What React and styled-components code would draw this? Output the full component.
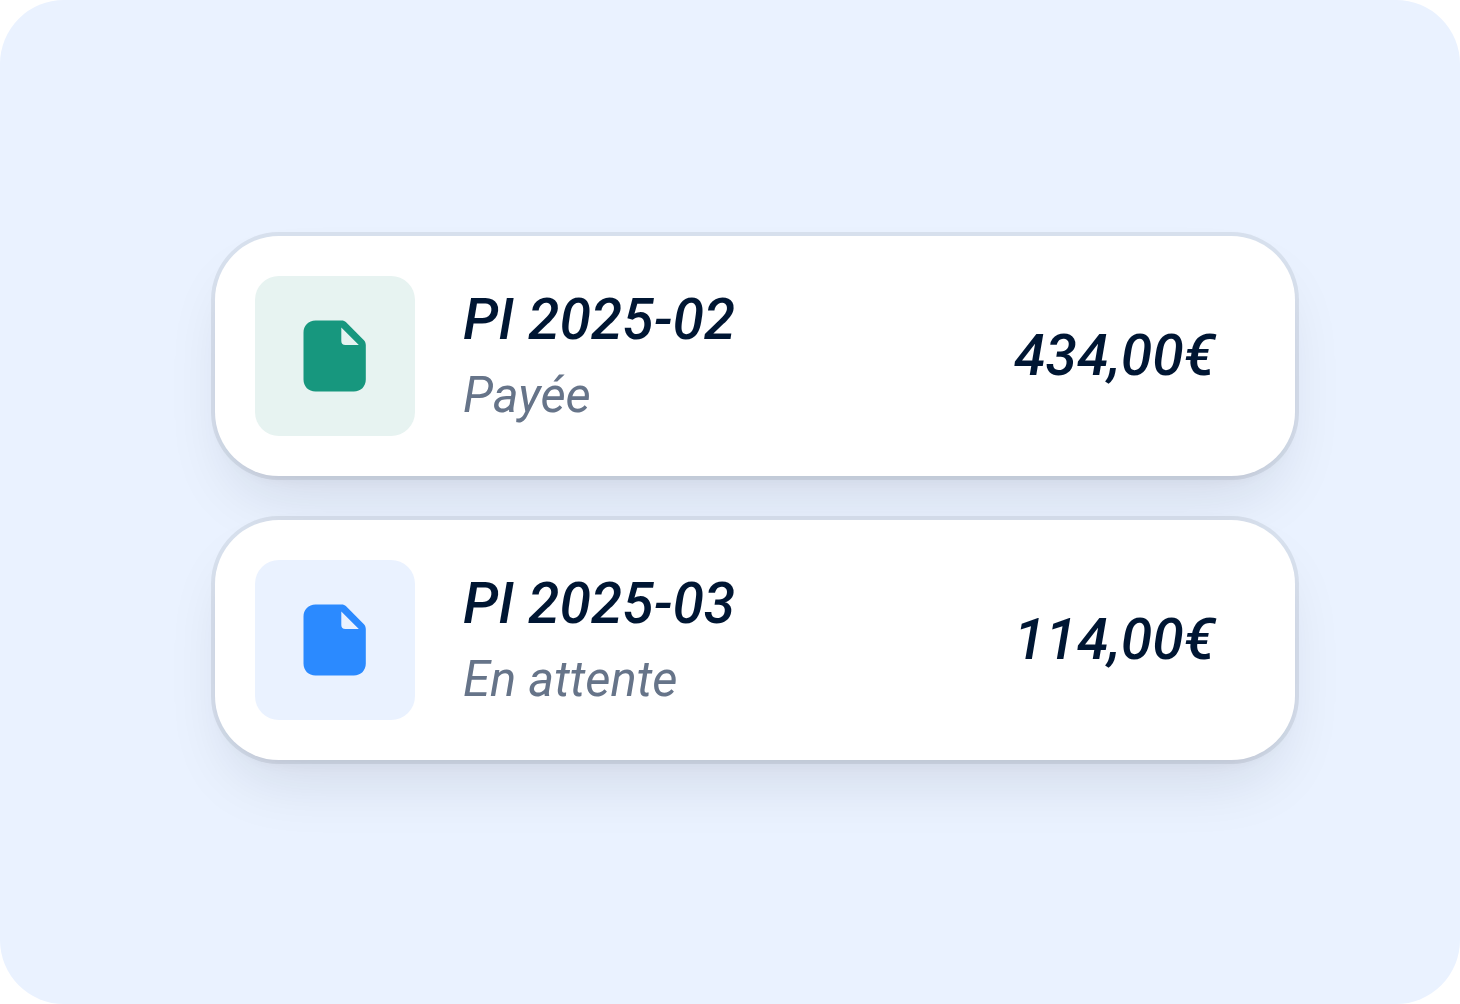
import React from "react";
import styled, { createGlobalStyle } from "styled-components";

const GlobalStyle = createGlobalStyle`
  *, *::before, *::after { box-sizing: border-box; }
  body { margin: 0; background: #ffffff; font-family: Roboto, "Liberation Sans", sans-serif; }
`;

const Stage = styled.main`
  min-height: 100vh;
  padding: 0 165px 8px 215px;
  border-radius: 64px;
  background: #eaf2ff;
  display: flex;
  flex-direction: column;
  justify-content: center;
`;

const InvoiceList = styled.ul`
  list-style: none;
  margin: 0;
  padding: 0;
  display: flex;
  flex-direction: column;
  gap: 44px;
`;

const InvoiceCard = styled.li`
  display: flex;
  align-items: center;
  gap: 48px;
  padding: 40px 80px 40px 40px;
  border-radius: 64px;
  background: #ffffff;
  box-shadow:
    0 0 0 4px rgba(16, 24, 40, 0.08),
    0 8px 16px -8px rgba(16, 24, 40, 0.06),
    0 32px 64px -16px rgba(16, 24, 40, 0.12);
`;

const IconTile = styled.div`
  flex: none;
  width: 160px;
  height: 160px;
  border-radius: 24px;
  display: grid;
  place-items: center;
  color: ${(p) => p.$color};
  background: ${(p) => p.$background};
`;

const Details = styled.div`
  flex: 1;
  min-width: 0;
`;

const Title = styled.h2`
  margin: 0;
  font-size: 57px;
  line-height: 80px;
  font-weight: 500;
  font-style: italic;
  color: #001633;
`;

const Status = styled.p`
  margin: 0;
  font-size: 49px;
  line-height: 72px;
  font-style: italic;
  color: #667489;
`;

const Amount = styled.span`
  font-size: 57px;
  line-height: 80px;
  font-weight: 500;
  font-style: italic;
  color: #001633;
`;

const FileIcon = () => (
  <svg width="96" height="96" viewBox="0 0 96 96" fill="currentColor" aria-hidden="true">
    <path
      fillRule="evenodd"
      d="M28.500 12.500H54.500C56.500 12.500 57.800 13 59.100 14.300L76.700 31.900C78 33.200 78.800 35 78.800 37V71.500C78.800 78.500 73.800 83.500 66.800 83.500H28.500C21.500 83.500 16.500 78.500 16.500 71.500V24.500C16.500 17.500 21.500 12.500 28.500 12.500ZM54.300 19.500V33C54.300 35.500 55.800 37 58.300 37H71.800Z"
    />
  </svg>
);

const invoices = [
  { title: "PI 2025-02", status: "Payée", amount: "434,00€", color: "#17977e", background: "#e7f3f1" },
  { title: "PI 2025-03", status: "En attente", amount: "114,00€", color: "#2b8aff", background: "#eaf2ff" },
];

export default function App() {
  return (
    <>
      <GlobalStyle />
      <Stage>
        <InvoiceList>
          {invoices.map((invoice) => (
            <InvoiceCard key={invoice.title}>
              <IconTile $color={invoice.color} $background={invoice.background}>
                <FileIcon />
              </IconTile>
              <Details>
                <Title>{invoice.title}</Title>
                <Status>{invoice.status}</Status>
              </Details>
              <Amount>{invoice.amount}</Amount>
            </InvoiceCard>
          ))}
        </InvoiceList>
      </Stage>
    </>
  );
}
